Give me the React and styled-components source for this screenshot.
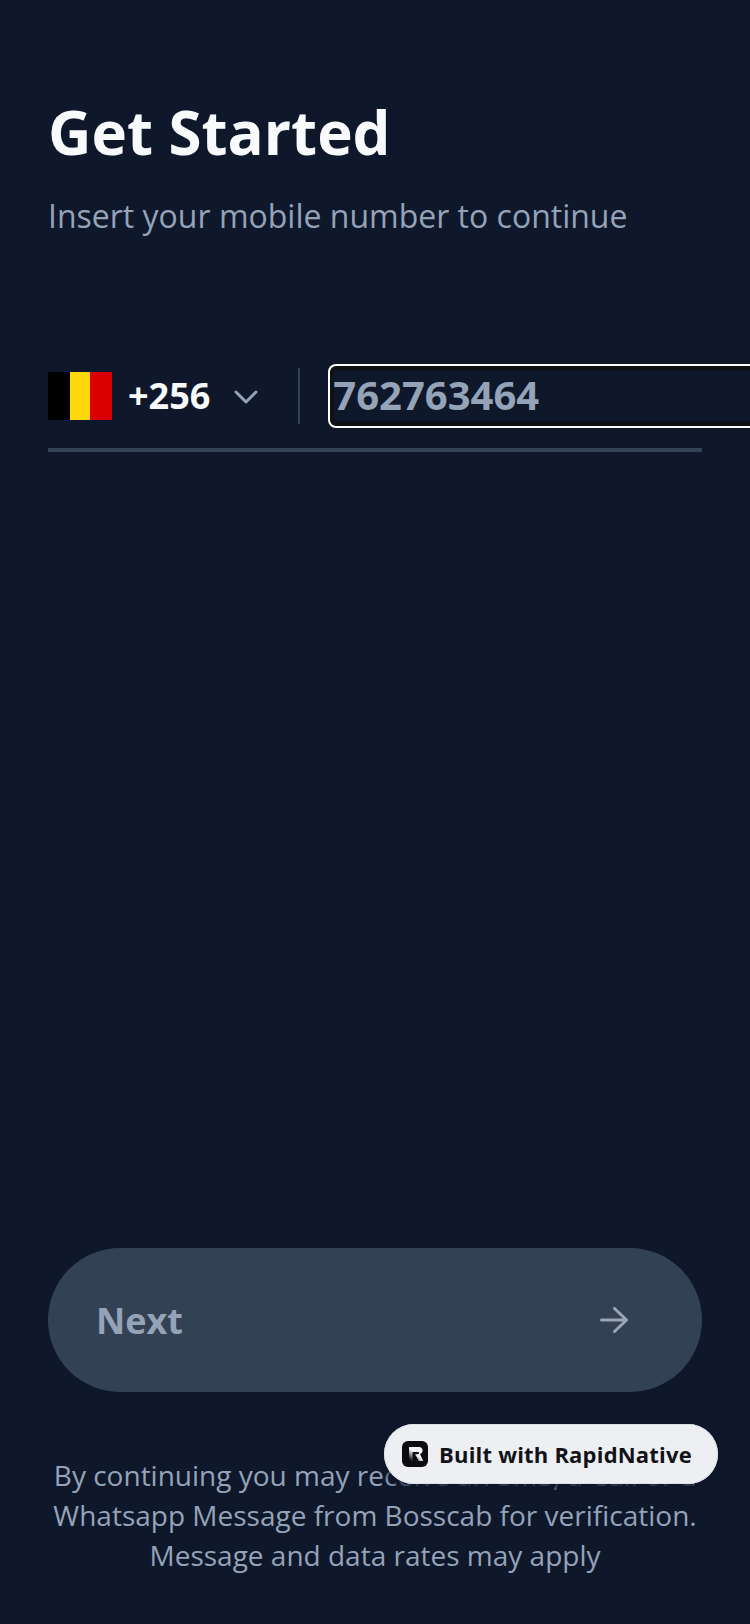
import React from "react";
import styled, { createGlobalStyle } from "styled-components";

const GlobalStyle = createGlobalStyle`
  html, body {
    margin: 0;
    padding: 0;
    background: #0f172a;
    overflow: hidden;
  }
  * {
    box-sizing: border-box;
  }
`;

const Screen = styled.div`
  display: flex;
  flex-direction: column;
  width: 750px;
  height: 1624px;
  padding: 94px 48px 0;
  background: #0f172a;
  font-family: "Open Sans", sans-serif;
`;

const Title = styled.h1`
  margin: 0;
  font-size: 60px;
  line-height: 76px;
  font-weight: 700;
  color: #f8fafc;
`;

const Subtitle = styled.p`
  margin: 22px 0 0;
  font-size: 32px;
  line-height: 48px;
  font-weight: 400;
  color: #94a3b8;
`;

const PhoneRow = styled.div`
  display: flex;
  align-items: center;
  height: 108px;
  margin-top: 104px;
  border-bottom: 4px solid #334155;
`;

const Flag = styled.div`
  display: flex;
  width: 64px;
  height: 48px;
  flex-shrink: 0;
`;

const Stripe = styled.div`
  width: ${(p) => p.$width}px;
  background: ${(p) => p.$color};
`;

const Code = styled.span`
  margin-left: 16px;
  font-size: 36px;
  line-height: 48px;
  font-weight: 700;
  color: #f8fafc;
`;

const Chevron = styled.svg`
  margin: 2px 0 0 24px;
  flex-shrink: 0;
`;

const Divider = styled.div`
  width: 2px;
  height: 56px;
  margin-left: 40px;
  flex-shrink: 0;
  background: #334155;
`;

const PhoneInput = styled.input`
  width: 440px;
  height: 64px;
  margin-left: 28px;
  padding: 0 5px 3px;
  flex-shrink: 0;
  background: #0f172a;
  border: 0;
  border-radius: 8px;
  outline: 0;
  box-shadow: inset 0 0 0 2px #ffffff, inset 0 0 0 6px #101114;
  font-family: "Open Sans", sans-serif;
  font-size: 40px;
  font-weight: 700;
  color: #94a3b8;

  &::placeholder {
    color: #94a3b8;
    opacity: 1;
  }
`;

const Spacer = styled.div`
  flex: 1;
`;

const NextButton = styled.button`
  display: flex;
  align-items: center;
  justify-content: space-between;
  width: 654px;
  height: 144px;
  padding: 0 74px 0 48px;
  border: 0;
  border-radius: 72px;
  background: #334155;
  font-family: "Open Sans", sans-serif;
  font-size: 36px;
  font-weight: 700;
  color: #94a3b8;
`;

const Terms = styled.p`
  margin: 63px 0 49px;
  font-size: 28px;
  line-height: 40px;
  text-align: center;
  color: #94a3b8;
`;

const Badge = styled.div`
  position: absolute;
  left: 384px;
  top: 1424px;
  display: flex;
  align-items: center;
  gap: 11px;
  width: 334px;
  height: 60px;
  padding-left: 18px;
  border-radius: 30px;
  background: #eeeff3;
  box-shadow: inset 0 0 0 1px #dfe1e8, 0 3px 8px 2px rgba(15, 23, 42, 0.95);
  font-size: 22px;
  font-weight: 700;
  letter-spacing: 0.2px;
  color: #111318;
`;

function App() {
  return (
    <Screen>
      <GlobalStyle />
      <Title>Get Started</Title>
      <Subtitle>Insert your mobile number to continue</Subtitle>
      <PhoneRow>
        <Flag>
          <Stripe $width={22} $color="#000000" />
          <Stripe $width={20} $color="#ffd90c" />
          <Stripe $width={22} $color="#da0000" />
        </Flag>
        <Code>+256</Code>
        <Chevron width="24" height="16" viewBox="0 0 24 16" fill="none">
          <path d="M2 3l10 10L22 3" stroke="#94a3b8" strokeWidth="3" strokeLinecap="round" strokeLinejoin="round" />
        </Chevron>
        <Divider />
        <PhoneInput placeholder="762763464" />
      </PhoneRow>
      <Spacer />
      <NextButton>
        Next
        <svg width="28" height="26" viewBox="0 0 28 26" fill="none">
          <path d="M1.5 13h25M14.5 1.5L26.5 13 14.5 24.5" stroke="#9ca5b5" strokeWidth="3" strokeLinecap="round" strokeLinejoin="round" />
        </svg>
      </NextButton>
      <Terms>
        By continuing you may receive an SMS, a Call or a
        <br />
        Whatsapp Message from Bosscab for verification.
        <br />
        Message and data rates may apply
      </Terms>
      <Badge>
        <svg width="26" height="26" viewBox="0 0 26 26">
          <defs>
            <linearGradient id="logoFade" x1="0.75" y1="0.25" x2="0.15" y2="0.95">
              <stop offset="0.4" stopColor="#f4f4f6" />
              <stop offset="1" stopColor="#1a1a1c" />
            </linearGradient>
          </defs>
          <rect width="26" height="26" rx="6" fill="#0c0c0e" />
          <path d="M7 6h10c2.300 0 3.600 1.600 3.600 3.600 0 1.800-1 3-2.600 3.500l3.200 6.900h-4.300L13 13.200h3c.7 0 1.100-.5 1.100-1.100S16.700 11 16 11h-5.500v9H7z" fill="url(#logoFade)" />
        </svg>
        Built with RapidNative
      </Badge>
    </Screen>
  );
}

export default App;
